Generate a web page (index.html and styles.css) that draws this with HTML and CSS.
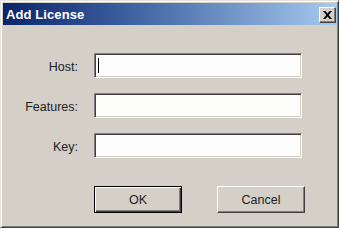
FILE: index.html
```html
<!DOCTYPE html>
<html>
<head>
	<title>Add License</title>
	<link rel="stylesheet" href="styles.css">
</head>
<body>

	<div class="window">
		<div class="titlebar">
			<span class="title">Add License</span>
			<span class="close">
				<svg width="9" height="8" viewBox="0 0 9 8">
					<path d="M0 0h2.4l2.1 2.6 2.1-2.6h2.4l-3.3 4 3.3 4h-2.4l-2.1-2.6-2.1 2.6h-2.4l3.3-4z" fill="#000"/>
				</svg>
			</span>
		</div>

		<div class="form">
			<label for="host">Host:</label>
			<div class="field caret"><input id="host" type="text"></div>
			<label for="features">Features:</label>
			<div class="field"><input id="features" type="text"></div>
			<label for="key">Key:</label>
			<div class="field"><input id="key" type="text"></div>
		</div>

		<div class="buttons">
			<button class="btn default">OK</button>
			<button class="btn">Cancel</button>
		</div>
	</div>

</body>
</html>
```

FILE: styles.css
```css
body{
	margin: 0;
	background-color: #fff;
	font-family: "Liberation Sans", Arial, sans-serif;
}
.window{
	width: 339px;
	height: 228px;
	box-sizing: border-box;
	padding: 1px;
	background-color: #d4d0c8;
	/* 经典win2000窗口的立体边框 */
	border-top: 1px solid #e4e2dc;
	border-left: 1px solid #e4e2dc;
	border-right: 1px solid #404040;
	border-bottom: 1px solid #404040;
	box-shadow: inset 1px 1px 0 #fff, inset -1px -1px 0 #808080;
}
.titlebar{
	display: flex;
	align-items: center;
	justify-content: space-between;
	height: 22px;
	margin: 1px 0 0 1px;
	padding: 0 1px 0 3px;
	background: linear-gradient(to right, #0a246a 0%, #3a5c9c 35%, #a6caf0 100%);
}
.title{
	color: #fff;
	font-weight: bold;
	font-size: 13px;
	letter-spacing: 0.1px;
}
.close{
	display: flex;
	align-items: center;
	justify-content: center;
	width: 17px;
	height: 16px;
	box-sizing: border-box;
	background-color: #d4d0c8;
	border-top: 1px solid #fff;
	border-left: 1px solid #fff;
	border-right: 1px solid #404040;
	border-bottom: 1px solid #404040;
	box-shadow: inset -1px -1px 0 #808080;
	margin-top: 1px;
}
.form{
	display: grid;
	grid-template-columns: 74px 208px;
	grid-auto-rows: 25px;
	column-gap: 16px;
	row-gap: 15px;
	margin: 28px 0 0 2px;
	font-size: 12.5px;
	color: #222;
}
.form label{
	display: flex;
	align-items: center;
	justify-content: flex-end;
	padding-top: 2px;
}
.field{
	position: relative;
	display: flex;
	box-sizing: border-box;
	border-top: 1px solid #808080;
	border-left: 1px solid #808080;
	border-right: 1px solid #fff;
	border-bottom: 1px solid #fff;
	box-shadow: inset 1px 1px 0 #404040, inset -1px -1px 0 #d4d0c8;
	background-color: #fdfdfb;
}
.field input{
	flex: 1;
	border: 0;
	margin: 2px;
	padding: 0 2px;
	background-color: transparent;
	outline: none;
}
.caret::after{
	/* 光标 */
	content: "";
	position: absolute;
	left: 3px;
	top: 4px;
	width: 1px;
	height: 15px;
	background-color: #000;
}
.buttons{
	display: flex;
	gap: 35px;
	margin: 28px 0 0 92px;
}
.btn{
	width: 88px;
	height: 27px;
	box-sizing: border-box;
	font-family: "Liberation Sans", Arial, sans-serif;
	font-size: 12.5px;
	color: #222;
	background-color: #d4d0c8;
	border-top: 1px solid #fff;
	border-left: 1px solid #fff;
	border-right: 1px solid #404040;
	border-bottom: 1px solid #404040;
	box-shadow: inset -1px -1px 0 #808080;
	padding: 0;
}
.btn.default{
	border: 1px solid #000;
	box-shadow: inset 1px 1px 0 #fff, inset -1px -1px 0 #404040, inset -2px -2px 0 #808080;
}
```
